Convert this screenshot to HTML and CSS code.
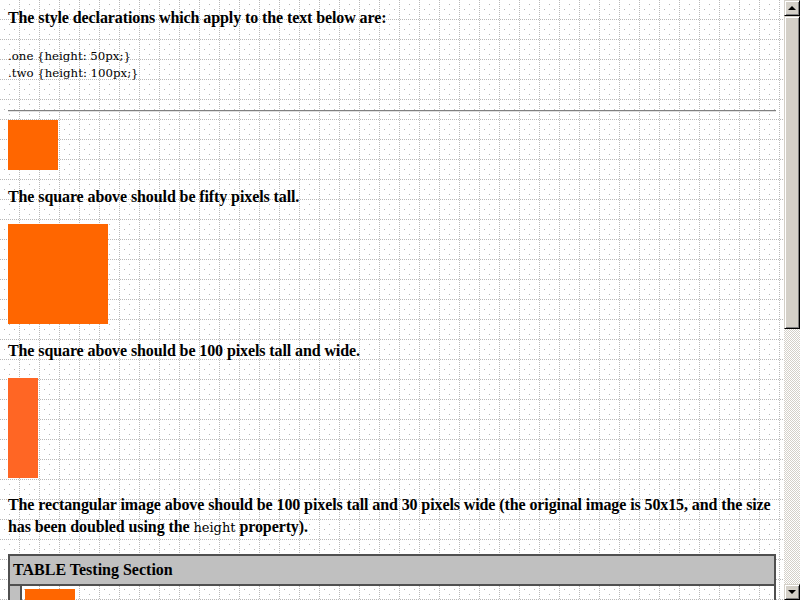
FILE: index.html
```
<!DOCTYPE html>
<html>
<head>
<meta charset="utf-8">
<title>CSS1 Test: height</title>
<link rel="stylesheet" href="styles.css">
</head>
<body>
<div class="viewport">
  <div class="page">
    <p class="intro">The style declarations which apply to the text below are:</p>
    <pre class="decl">.one {height: 50px;}
.two {height: 100px;}</pre>
    <hr class="rule">
    <div class="sq sq-one"></div>
    <p class="note">The square above should be fifty pixels tall.</p>
    <div class="sq sq-two"></div>
    <p class="note">The square above should be 100 pixels tall and wide.</p>
    <div class="sq sq-rect"></div>
    <p class="note note-wrap">The rectangular image above should be 100 pixels tall and 30 pixels wide (the original image is 50x15, and the size has been doubled using the <code class="code">height</code> property).</p>
    <table class="tabletest">
      <tr><td colspan="2" class="head">TABLE Testing Section</td></tr>
      <tr>
        <td class="side">&nbsp;</td>
        <td class="body-cell">
          <div class="sq sq-one"></div>
          <p class="note">The square above should be fifty pixels tall.</p>
        </td>
      </tr>
    </table>
  </div>
  <div class="scrollbar">
    <div class="sb-btn"><span class="arrow-up"></span></div>
    <div class="sb-thumb"></div>
    <div class="sb-track"></div>
    <div class="sb-btn"><span class="arrow-down"></span></div>
  </div>
</div>
</body>
</html>
```
FILE: styles.css
```
html, body {
  margin: 0;
  padding: 0;
}
body {
  font-family: "Liberation Serif", serif;
  font-size: 16px;
  font-weight: bold;
  letter-spacing: -0.1px;
  color: #000;
}
.viewport {
  display: flex;
  width: 800px;
  height: 600px;
  overflow: hidden;
}
.page {
  flex: 1;
  padding: 8px;
  overflow: hidden;
  background-color: #fff;
  background-image: url("data:image/svg+xml,%3Csvg xmlns='http://www.w3.org/2000/svg' width='20' height='20'%3E%3Cg fill='%23b8b8b8'%3E%3Cpath d='M19 0h1v1h-1zM19 2h1v1h-1zM19 4h1v1h-1zM19 6h1v1h-1zM19 8h1v1h-1zM19 10h1v1h-1zM19 12h1v1h-1zM19 14h1v1h-1zM19 16h1v1h-1zM19 18h1v1h-1zM0 19h1v1h-1zM2 19h1v1h-1zM4 19h1v1h-1zM6 19h1v1h-1zM8 19h1v1h-1zM10 19h1v1h-1zM12 19h1v1h-1zM14 19h1v1h-1zM16 19h1v1h-1zM18 19h1v1h-1zM9 4h1v1h-1zM4 9h1v1h-1zM14 9h1v1h-1zM9 14h1v1h-1z'/%3E%3C/g%3E%3C/svg%3E");
  background-size: 20px 20px;
}
.intro {
  margin: 0;
  line-height: 20px;
}
.decl {
  margin: 20px 0 0;
  font-family: "DejaVu Serif", serif;
  font-weight: normal;
  font-size: 11.75px;
  letter-spacing: 0;
  line-height: 17px;
}
.rule {
  margin: 28px 0 8px;
  border: 0;
  border-top: 1px solid #808080;
  border-bottom: 1px solid #e0e0e0;
  height: 0;
}
.sq {
  background: #ff6600;
}
.sq-one {
  width: 50px;
  height: 50px;
}
.sq-two {
  width: 100px;
  height: 100px;
}
.sq-rect {
  width: 30px;
  height: 100px;
  background: #ff6624;
}
.note {
  margin: 17px 0;
  line-height: 20px;
}
.note-wrap {
  line-height: 22px;
  margin: 16px 0 15px;
}
.code {
  font-family: "DejaVu Serif", serif;
  font-weight: normal;
  font-size: 13px;
  letter-spacing: 0;
}
.tabletest {
  width: 100%;
  border-collapse: separate;
  border-spacing: 0;
  border: 1px solid #505050;
}
.tabletest td {
  border: 1px solid #505050;
  padding: 3px;
  vertical-align: top;
  text-align: left;
}
.tabletest .head {
  background: #c0c0c0;
  line-height: 22px;
  letter-spacing: 0;
}
.tabletest .side {
  background: #c0c0c0;
  width: 4px;
}
.body-cell .note {
  margin-bottom: 0;
}
.scrollbar {
  width: 16px;
  display: flex;
  flex-direction: column;
  background: #d4d0c8;
}
.sb-btn {
  height: 16px;
  box-sizing: border-box;
  background: #d4d0c8;
  border-top: 1px solid #d4d0c8;
  border-left: 1px solid #d4d0c8;
  border-right: 1px solid #000;
  border-bottom: 1px solid #000;
  box-shadow: inset 1px 1px 0 #fff, inset -1px -1px 0 #808080;
  display: flex;
  align-items: center;
  justify-content: center;
}
.arrow-up {
  width: 0;
  height: 0;
  border-left: 4px solid transparent;
  border-right: 4px solid transparent;
  border-bottom: 4px solid #000;
}
.arrow-down {
  width: 0;
  height: 0;
  border-left: 4px solid transparent;
  border-right: 4px solid transparent;
  border-top: 4px solid #000;
}
.sb-thumb {
  height: 313px;
  box-sizing: border-box;
  background: #d4d0c8;
  border-top: 1px solid #d4d0c8;
  border-left: 1px solid #d4d0c8;
  border-right: 1px solid #000;
  border-bottom: 1px solid #000;
  box-shadow: inset 1px 1px 0 #fff, inset -1px -1px 0 #808080;
}
.sb-track {
  flex: 1;
  background: repeating-conic-gradient(#d4d0c8 0 25%, #fff 0 50%) 0 0 / 2px 2px;
}
```
